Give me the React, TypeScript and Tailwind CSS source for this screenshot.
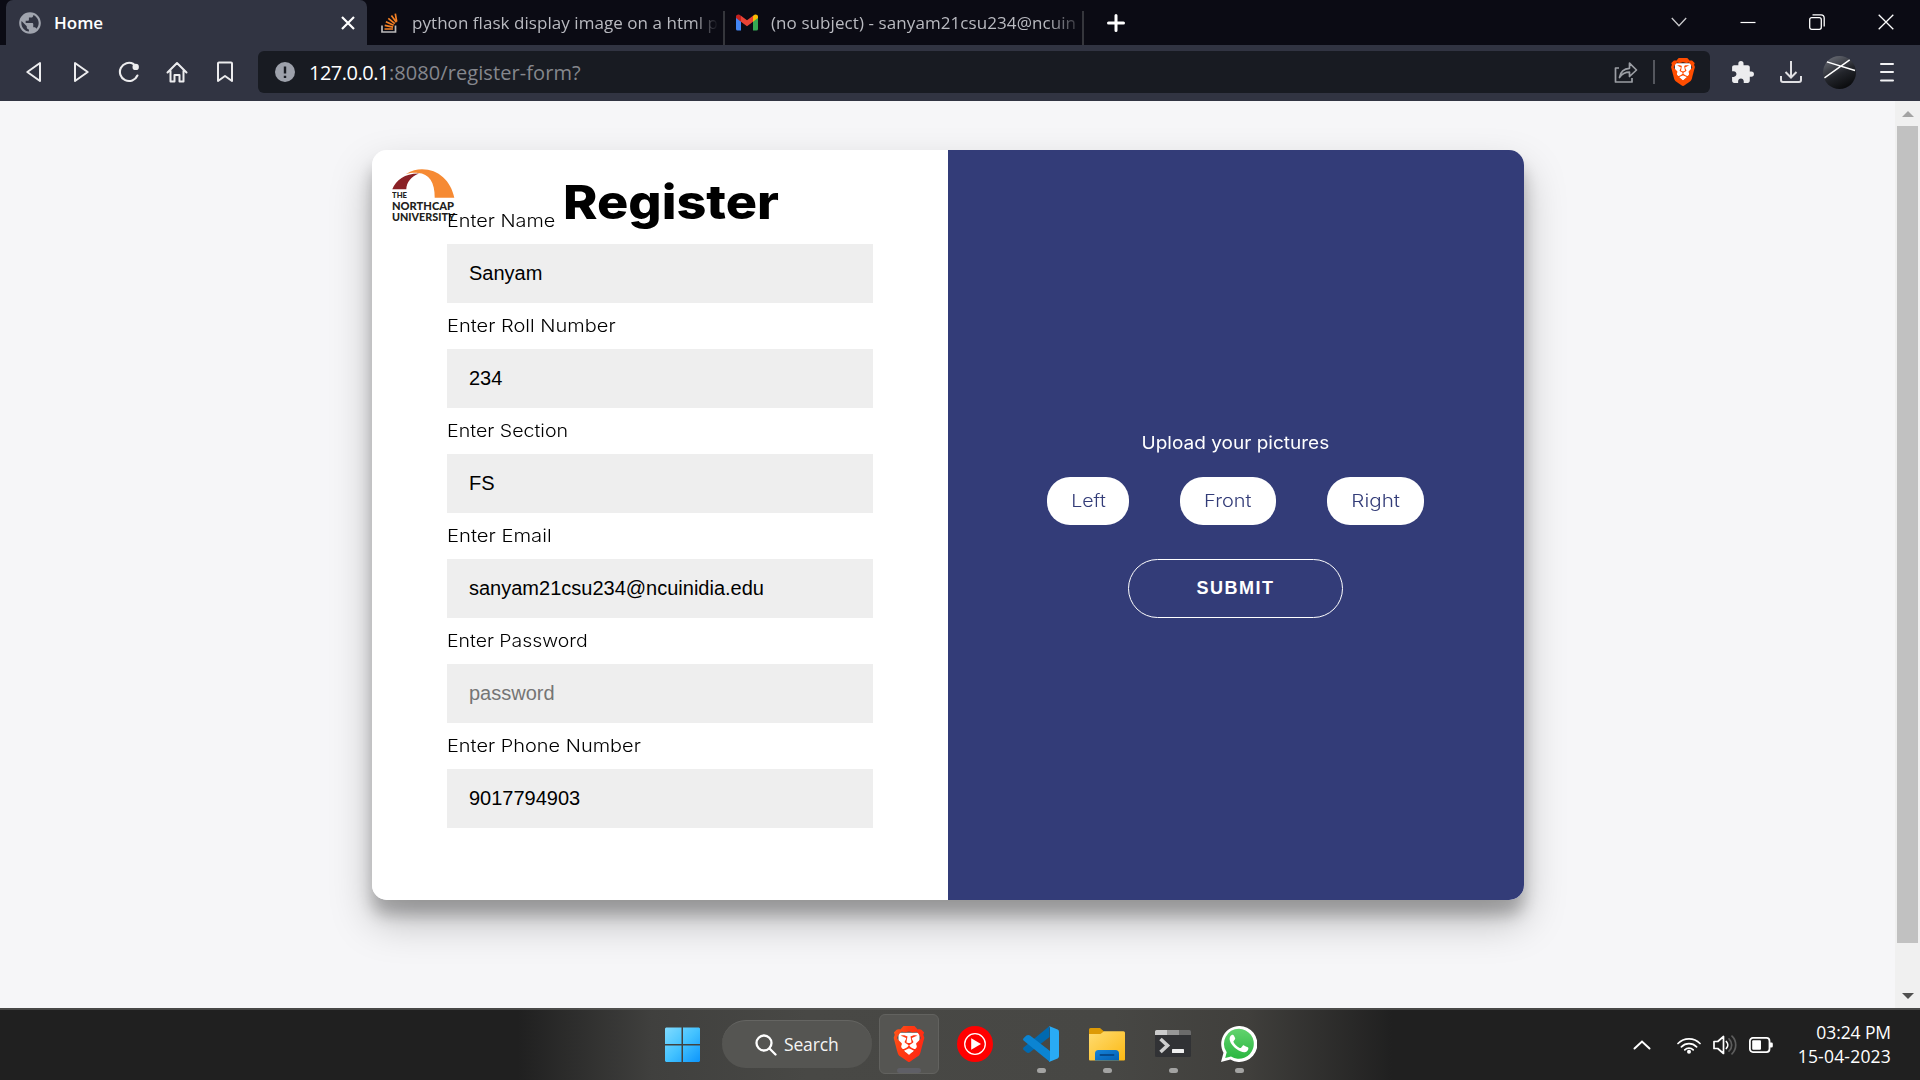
import React from "react";
import { SiBrave } from "react-icons/si";
import { MdExtension, MdPublic } from "react-icons/md";

const FIELDS = [
  { label: "Enter Name", value: "Sanyam", stretch: "scale-x-[1.135]" },
  { label: "Enter Roll Number", value: "234", stretch: "scale-x-[1.145]" },
  { label: "Enter Section", value: "FS", stretch: "scale-x-[1.12]" },
  { label: "Enter Email", value: "sanyam21csu234@ncuinidia.edu", stretch: "scale-x-[1.155]" },
  { label: "Enter Password", value: "", placeholder: "password", stretch: "scale-x-[1.11]" },
  { label: "Enter Phone Number", value: "9017794903", stretch: "scale-x-[1.14]" },
];

function BraveLion({ className, fill }: { className: string; fill: string }) {
  return (
    <svg viewBox="0 0 24 24" className={className}>
      <defs>
        <linearGradient id="lion" x1="0" y1="0" x2="1" y2="0.4">
          <stop offset="0" stopColor="#ff5a1c" />
          <stop offset="0.45" stopColor="#ff3a12" />
          <stop offset="1" stopColor="#ff2a14" />
        </linearGradient>
      </defs>
      <polygon points="5,4.5 19,4.5 19,13 12,20 5,13" fill="#fff" />
      <SiBrave size={24} style={{ fill }} />
    </svg>
  );
}

function GmailLogo() {
  return (
    <svg viewBox="0 0 22 16" className="h-[17px] w-[22px]">
      <path d="M0 2v12.5A1.5 1.5 0 0 0 1.500 16H5V6.500z" fill="#4285f4" />
      <path d="M17 6.500V16h3.500a1.500 1.500 0 0 0 1.500-1.500V2z" fill="#34a853" />
      <path d="M17 1.300V7.200l5-3.700V2.200C22 .2 19.700-.7 18.200.4z" fill="#fbbc04" />
      <path d="M5 7.200V1.300l6 4.500 6-4.500v5.900l-6 4.500z" fill="#ea4335" />
      <path d="M0 2.200v1.300l5 3.700V1.300L3.800.4C2.300-.7 0 .2 0 2.200z" fill="#c5221f" />
    </svg>
  );
}

function TabStrip() {
  return (
    <div className="flex h-[45px] bg-[#0b0b14] pl-[6px]">
      <div className="flex w-[361px] items-center rounded-t-[7px] bg-[#313442] pl-[11px] pr-[12px]">
        <MdPublic className="size-[26px] text-[#a0a4ae]" />
        <span className="ml-[11px] text-[17px] font-semibold text-white">Home</span>
        <svg viewBox="0 0 14 14" className="ml-auto size-[14px] stroke-white" strokeWidth="2.200">
          <path d="M1 1l12 12M13 1L1 13" />
        </svg>
      </div>
      <div className="flex w-[357px] items-center pl-[14px]">
        <svg viewBox="0 0 17 20" className="h-[20px] w-[17px] shrink-0" fill="none">
          <path d="M1 12.500V19h13.500v-6.500" stroke="#bcbbbb" strokeWidth="1.700" />
          <path d="M3.500 16h8.500M3.700 12.400l8.400 1.700M4.900 8.700l7.800 3.600M7.300 5.300l6.500 5.400M10.400 2.600l5 6.700M14.300.6l1.400 8" stroke="#f48024" strokeWidth="1.700" />
        </svg>
        <span className="ml-[14px] w-[306px] overflow-hidden whitespace-nowrap text-[17px] tracking-[0.05px] text-[#b9bac0] [mask-image:linear-gradient(to_right,black_92%,transparent_100%)]">
          python flask display image on a html p
        </span>
      </div>
      <div className="mt-[11px] h-[34px] w-[2px] shrink-0 -translate-x-[1px] bg-[#35363c]" />
      <div className="flex w-[357px] items-center pl-[10px]">
        <GmailLogo />
        <span className="ml-[13px] w-[306px] overflow-hidden whitespace-nowrap text-[17px] tracking-[0.08px] text-[#b9bac0] [mask-image:linear-gradient(to_right,black_90%,transparent_103%)]">
          (no subject) - sanyam21csu234@ncuin
        </span>
      </div>
      <div className="mt-[11px] h-[34px] w-[2px] shrink-0 -translate-x-[1px] bg-[#35363c]" />
      <svg viewBox="0 0 18 18" className="ml-[22px] mt-[14px] size-[18px] stroke-white" strokeWidth="3" strokeLinecap="round">
        <path d="M9 1.500v15M1.500 9h15" />
      </svg>
      <div className="ml-auto flex items-center pr-[26px] pb-[2px]">
        <svg viewBox="0 0 16 16" className="size-[16px]" fill="none" stroke="#c9c9cc" strokeWidth="1.300"><path d="M.8 4L8 11.800 15.200 4" /></svg>
        <svg viewBox="0 0 16 16" className="ml-[53px] size-[16px]" fill="none" stroke="#fff" strokeWidth="1.200"><path d="M.5 8.500h15" /></svg>
        <svg viewBox="0 0 16 16" className="ml-[53px] size-[16px]" fill="none" stroke="#fff" strokeWidth="1.300">
          <rect x=".7" y="3.700" width="11.600" height="11.600" rx="2" />
          <path d="M3.500.9H12a3.200 3.200 0 0 1 3.200 3.200v8.400" />
        </svg>
        <svg viewBox="0 0 16 16" className="ml-[53px] size-[16px]" fill="none" stroke="#fff" strokeWidth="1.300"><path d="M.7.7l14.600 14.600M15.300.7L.7 15.300" /></svg>
      </div>
    </div>
  );
}

function Toolbar() {
  return (
    <div className="flex h-[56px] items-center bg-[#313442] pl-[25px] pr-[26px] pb-[2px]">
      <svg viewBox="0 0 16 22" className="h-[22px] w-[17px]" fill="none" stroke="#ececee" strokeWidth="2" strokeLinejoin="round"><path d="M14.500 2v18L1.800 11z" /></svg>
      <svg viewBox="0 0 16 22" className="ml-[31px] h-[22px] w-[17px]" fill="none" stroke="#ececee" strokeWidth="2" strokeLinejoin="round"><path d="M1.500 2v18L14.200 11z" /></svg>
      <svg viewBox="0 0 22 22" className="ml-[28px] size-[22px]" fill="none" stroke="#ececee" strokeWidth="2.100" strokeLinecap="round">
        <path d="M15.500 3A9.100 9.100 0 1 0 19.400 14.500" />
        <circle cx="17.700" cy="5.900" r="3.200" fill="#ececee" stroke="none" />
      </svg>
      <svg viewBox="0 0 22 22" className="ml-[26px] size-[22px]" fill="none" stroke="#ececee" strokeWidth="2" strokeLinejoin="round" strokeLinecap="round">
        <path d="M1.500 11.500L11 2l9.500 9.500M4.500 10v10.500h4V14h5v6.500h4V10" />
      </svg>
      <svg viewBox="0 0 18 22" className="ml-[28px] h-[22px] w-[18px]" fill="none" stroke="#ececee" strokeWidth="2" strokeLinejoin="round"><path d="M2 2.500A1 1 0 0 1 3 1.500h12a1 1 0 0 1 1 1V20l-7-5-7 5z" /></svg>
      <div className="ml-[24px] flex h-[42px] flex-1 items-center rounded-[6px] bg-[#181b22] pl-[17px] pr-[13px]">
        <svg viewBox="0 0 20 20" className="size-[20px]">
          <circle cx="10" cy="10" r="10" fill="#9da1ab" />
          <path d="M10 4.500v7M10 13.700v2.300" stroke="#181b22" strokeWidth="2.400" />
        </svg>
        <span className="ml-[14px] whitespace-nowrap pt-[2px] text-[20px] tracking-[-0.500px] text-white">127.0.0.1</span>
        <span className="whitespace-nowrap pt-[2px] text-[20px] tracking-[0.080px] text-[#85878d]">:8080/register-form?</span>
        <svg viewBox="0 0 24 22" className="ml-auto h-[22px] w-[24px]" fill="none" stroke="#9b9ea4" strokeWidth="1.700" strokeLinejoin="round">
          <path d="M5 7H1.500v14H18v-4" />
          <path d="M5.500 16.500C6.500 10.500 10 7.500 15.500 7.300V2.200L22.500 9l-7 6.500v-4.300C11 11.200 8 12.700 5.500 16.500z" />
        </svg>
        <div className="ml-[15px] h-[24px] w-[2px] bg-[#54575e]" />
        <BraveLion className="ml-[14px] size-[28px]" fill="#ff4d00" />
      </div>
      <MdExtension className="ml-[20px] size-[25px] text-[#ececee]" />
      <svg viewBox="0 0 22 22" className="ml-[25px] size-[22px]" fill="none" stroke="#e0e0e3" strokeWidth="2"><path d="M11 0v16M5.500 11l5.500 5.500L16.500 11M1 15v4a2 2 0 0 0 2 2h16a2 2 0 0 0 2-2v-4" /></svg>
      <svg viewBox="0 0 34 34" className="ml-[21px] size-[33px]">
        <defs>
          <linearGradient id="avatar" x1="0.200" y1="0" x2="0.700" y2="1">
            <stop offset="0" stopColor="#6a6d76" />
            <stop offset="0.550" stopColor="#23252b" />
            <stop offset="1" stopColor="#08090b" />
          </linearGradient>
        </defs>
        <circle cx="17" cy="17" r="17" fill="url(#avatar)" />
        <path d="M1.500 22.500L27.500 4M4 6l29 9" stroke="#fff" strokeWidth="1.500" />
      </svg>
      <svg viewBox="0 0 14 20" className="ml-[24px] h-[20px] w-[14px]" stroke="#f2f2f4" strokeWidth="2" strokeLinecap="round"><path d="M1 2h12M1 10h12M1 18.500h12" /></svg>
    </div>
  );
}

function UniversityLogo() {
  return (
    <svg viewBox="0 0 64 58" className="absolute left-[20.500px] top-[18px] h-[58px] w-[64px]">
      <path d="M.3 21.300C4 12 13 5.200 27 5.400 19 8.500 14.600 14 14.300 21.300z" fill="#8a2126" />
      <path d="M14 6C19.500 2.500 25 1.300 30 1.300c16.500 0 29 11.700 32.300 28.400H42.700C43 14 37 5.600 26 4.900 21 4.700 18 5 14 6z" fill="#f68a33" />
      <g fontFamily="Lato, 'Open Sans', sans-serif" fontWeight="900" fill="#231f20">
        <text x="0" y="30" fontSize="8" textLength="15" lengthAdjust="spacingAndGlyphs">THE</text>
        <text x="0" y="41.800" fontSize="12" textLength="62" lengthAdjust="spacingAndGlyphs">NORTHCAP</text>
        <text x="0" y="52.800" fontSize="12" textLength="63" lengthAdjust="spacingAndGlyphs">UNIVERSITY</text>
      </g>
    </svg>
  );
}

function RegisterCard() {
  return (
    <div className="flex h-[750px] w-[1152px] overflow-hidden rounded-[15px] bg-white font-['Inter',sans-serif]">
      <div className="relative w-[576px] px-[75px] pt-[48px]">
        <UniversityLogo />
        <h1 className="absolute left-[191.500px] top-[21.500px] origin-left scale-x-[1.110] whitespace-nowrap text-[47px] font-extrabold leading-[60px] text-black">Register</h1>
        {FIELDS.map((f) => (
          <label key={f.label} className="relative block">
            <span className={`block h-[46px] w-fit origin-left whitespace-nowrap text-[17.500px] font-light leading-[46px] text-black ${f.stretch}`}>{f.label}</span>
            <input
              readOnly
              value={f.value}
              placeholder={f.placeholder}
              className="block h-[59px] w-[426px] bg-[#eeeeee] px-[22.500px] font-['Liberation_Sans',sans-serif] text-[20px] text-black outline-none placeholder:text-[#757575]"
            />
          </label>
        ))}
      </div>
      <div className="flex flex-1 flex-col items-center bg-[#333c78] pt-[278px]">
        <p className="scale-x-[1.087] text-[17.500px] leading-[29px] text-white">Upload your pictures</p>
        <div className="mt-[20px] flex gap-[51px] text-[17.500px] font-light text-[#333c78]">
          <span className="flex h-[48px] w-[82px] items-center justify-center rounded-[23px] bg-white"><span className="scale-x-[1.120]">Left</span></span>
          <span className="flex h-[48px] w-[96px] items-center justify-center rounded-[23px] bg-white"><span className="scale-x-[1.140]">Front</span></span>
          <span className="flex h-[48px] w-[97px] items-center justify-center rounded-[23px] bg-white"><span className="scale-x-[1.180]">Right</span></span>
        </div>
        <button className="mt-[34px] h-[59px] w-[215px] rounded-[30px] border border-white font-['Liberation_Sans',sans-serif] text-[18px] font-bold tracking-[1.500px] text-white">SUBMIT</button>
      </div>
    </div>
  );
}

function Scrollbar() {
  return (
    <div className="flex w-[25px] flex-col items-center bg-[#f0f0f0]">
      <svg viewBox="0 0 12 6" className="mt-[10px] h-[6px] w-[12px]"><path d="M6 0l6 6H0z" fill="#a3a3a3" /></svg>
      <div className="mt-[9px] h-[817px] w-[21px] bg-[#c1c1c1]" />
      <svg viewBox="0 0 12 6" className="mt-[50px] h-[6px] w-[12px]"><path d="M6 6l6-6H0z" fill="#505050" /></svg>
    </div>
  );
}

function RunningApp({ children }: { children: React.ReactNode }) {
  return (
    <div className="flex w-[36px] flex-col items-center pt-[16px]">
      {children}
      <div className="mt-[6px] h-[5px] w-[9px] rounded-full bg-[#a3a3a2]" />
    </div>
  );
}

function Taskbar() {
  return (
    <div className="grid h-[72px] grid-cols-[1fr_592px_1fr] border-t-2 border-[#5a5a58]/70 bg-[linear-gradient(to_right,#202020_27%,#40403e_34%,#484845_42%,#474744_58%,#403f3c_65%,#202020_72.500%)]">
      <div />
      <div className="flex translate-x-[1px]">
        <svg viewBox="0 0 36 36" className="mt-[17px] size-[36px] -translate-x-[0.500px]">
          <defs>
            <linearGradient id="win" x1="0" y1="0" x2="36" y2="36" gradientUnits="userSpaceOnUse">
              <stop offset="0" stopColor="#82dcff" />
              <stop offset="0.500" stopColor="#43c2ff" />
              <stop offset="1" stopColor="#0a93fb" />
            </linearGradient>
          </defs>
          <path d="M1.500.5H17v16.500H.5V1.500zM18.500.5h16l1 1V17h-17zM.5 18.500H17V35H1.500l-1-1zM18.500 18.500h17V34l-1 1h-16z" fill="url(#win)" />
        </svg>
        <div className="ml-[21px] mt-[10px] flex h-[48px] w-[150px] items-center rounded-full border-t border-[#656562] bg-[#555552] pl-[33px]">
          <svg viewBox="0 0 22 22" className="size-[22px]" fill="none" stroke="#fff" strokeWidth="2.300" strokeLinecap="round"><circle cx="9" cy="9" r="7.500" /><path d="M14.500 14.500L20.500 20.500" /></svg>
          <span className="ml-[7px] text-[17.500px] tracking-[-0.150px] text-[#f4f4f4]">Search</span>
        </div>
        <div className="ml-[7px] mt-[4px] flex h-[60px] w-[60px] flex-col items-center rounded-[6px] border border-[#62625f] bg-[#555552] pt-[11px]">
          <BraveLion className="size-[36px]" fill="url(#lion)" />
          <div className="mt-[6px] h-[5px] w-[24px] shrink-0 rounded-full bg-[#5f5f66]" />
        </div>
        <svg viewBox="0 0 36 36" className="ml-[18px] mt-[16px] size-[36px]">
          <circle cx="18" cy="18" r="18" fill="#f00" />
          <circle cx="18" cy="18" r="10.300" fill="none" stroke="#fff" strokeWidth="1.300" />
          <path d="M14.200 12.300L24 18l-9.800 5.700z" fill="#fff" />
        </svg>
        <div className="ml-[30px] flex gap-[30px]">
          <RunningApp>
            <svg viewBox="0 0 36 36" className="size-[36px]">
              <path d="M26.500 0v11L7 26.300a3 3 0 0 1-3.600 0L.8 24a1.800 1.800 0 0 1 0-2.700z" fill="#0069b0" />
              <path d="M.8 12l2.600-2.400a3 3 0 0 1 3.600 0L27 25v11L.8 14.700A1.800 1.800 0 0 1 .8 12z" fill="#0b84d2" />
              <path d="M26 0l8.600 3.600A2.500 2.500 0 0 1 36 5.900v24.200a2.500 2.500 0 0 1-1.400 2.300L26 36c.7-.5 1-1.300 1-2.200V2.200c0-.9-.3-1.700-1-2.200z" fill="#29abf5" />
            </svg>
          </RunningApp>
          <RunningApp>
            <svg viewBox="0 0 36 36" className="size-[36px]">
              <defs>
                <linearGradient id="folder" x1="0" y1="0" x2="1" y2="1"><stop offset="0" stopColor="#ffdc72" /><stop offset="1" stopColor="#fcb913" /></linearGradient>
                <linearGradient id="drawer" x1="0" y1="0" x2="1" y2="1"><stop offset="0" stopColor="#1683d8" /><stop offset="1" stopColor="#0360b4" /></linearGradient>
              </defs>
              <path d="M0 3.500A1.500 1.500 0 0 1 1.500 2H11l4 3.500V9H0z" fill="#dd9a06" />
              <path d="M0 8h11.500L15 5.200h19.500A1.500 1.500 0 0 1 36 6.700V33.500a1 1 0 0 1-1 1H1a1 1 0 0 1-1-1z" fill="url(#folder)" />
              <path d="M6 34.500V27.500a3.500 3.500 0 0 1 3.500-3.500h17a3.500 3.500 0 0 1 3.500 3.500v7z" fill="url(#drawer)" />
              <path d="M11.500 29h13" stroke="#064a8c" strokeWidth="1.800" strokeLinecap="round" />
            </svg>
          </RunningApp>
          <RunningApp>
            <svg viewBox="0 0 36 36" className="size-[36px]">
              <rect y="4" width="36" height="27" rx="1.500" fill="#313235" />
              <path d="M0 9V5.500A1.500 1.500 0 0 1 1.500 4H12v5z" fill="#cbcbcb" />
              <path d="M12 4h12v5H12z" fill="#979797" />
              <path d="M24 4h10.500A1.500 1.500 0 0 1 36 5.500V9H24z" fill="#6b6b6b" />
              <path d="M5.500 13l7 6.500-7 6.500" fill="none" stroke="#cfcfcf" strokeWidth="3.600" />
              <rect x="17" y="23" width="12" height="4" rx=".6" fill="#f0f0f0" />
            </svg>
          </RunningApp>
          <RunningApp>
            <svg viewBox="0 0 36 36" className="size-[36px]">
              <defs><linearGradient id="wa" x1="0" y1="0" x2="0" y2="1"><stop offset="0" stopColor="#62d36e" /><stop offset="1" stopColor="#2bb741" /></linearGradient></defs>
              <path d="M18 0a18 18 0 1 1-8.600 33.600L0 36l2.500-9.200A18 18 0 0 1 18 0z" fill="#fff" />
              <path d="M18 2.800a15 15 0 1 1-8 27.800L4.200 32l1.500-5.700A15 15 0 0 1 18 2.800z" fill="url(#wa)" />
              <path d="M12.800 9.600c-.5-1-1-.9-1.700-.8-1 .2-2.500 1.700-2.500 4 0 3.300 3 7.200 6.500 10 3.600 2.800 7.500 4 9.500 3.200 1.800-.7 2.700-2.200 2.800-3.800 0-.7-.3-.9-4.300-2.800-.6-.2-1-.2-1.400.4l-1.600 2c-.4.4-.8.400-1.400.1-3-1.400-5-3.400-6.200-5.800-.2-.4-.1-.8.200-1.100l1.300-1.700c.3-.5.2-.8.100-1.200z" fill="#fff" />
            </svg>
          </RunningApp>
        </div>
      </div>
      <div className="flex items-center justify-end pr-[29px]">
        <svg viewBox="0 0 18 10" className="h-[10px] w-[18px]" fill="none" stroke="#fff" strokeWidth="2" strokeLinecap="round"><path d="M1.500 8.500L9 1.500l7.500 7" /></svg>
        <svg viewBox="0 0 24 18" className="ml-[26px] h-[18px] w-[24px]" fill="none" stroke="#fff" strokeWidth="1.700" strokeLinecap="round">
          <path d="M1 7.500a15.500 15.500 0 0 1 22 0M4.400 10.800a10.800 10.800 0 0 1 15.200 0M7.800 13.800a6 6 0 0 1 8.400 0" />
          <circle cx="12" cy="15.700" r="2" fill="#fff" stroke="none" />
        </svg>
        <svg viewBox="0 0 25 20" className="ml-[12px] h-[20px] w-[25px]" fill="none" stroke="#fff" strokeWidth="1.700" strokeLinejoin="round" strokeLinecap="round">
          <path d="M1 6.500h3.800L10.500 1.500v17L4.800 13.500H1z" />
          <path d="M13.300 6.500a5 5 0 0 1 0 7" />
          <path d="M16 3.800a8.500 8.500 0 0 1 0 12.400M19 1.200a12.300 12.300 0 0 1 0 17.600" stroke="#5d5d5d" />
        </svg>
        <svg viewBox="0 0 24 16" className="ml-[11px] h-[16px] w-[24px]" fill="none" stroke="#fff" strokeWidth="1.800">
          <rect x=".9" y=".9" width="19.600" height="14.200" rx="3" />
          <rect x="3.200" y="3.200" width="8.800" height="9.600" rx="1" fill="#fff" stroke="none" />
          <path d="M21 5.500h1.500a1.300 1.300 0 0 1 1.300 1.300v2.400a1.300 1.300 0 0 1-1.300 1.300H21z" fill="#fff" stroke="none" />
        </svg>
        <div className="ml-[25px] pb-[3px] text-right text-[17.500px] leading-[24px] text-white">
          <div className="tracking-[-0.100px]">03:24 PM</div>
          <div className="tracking-[0.200px]">15-04-2023</div>
        </div>
      </div>
    </div>
  );
}

export default function App() {
  return (
    <div className="flex h-[1080px] w-[1920px] flex-col overflow-hidden font-['Open_Sans',sans-serif]">
      <TabStrip />
      <Toolbar />
      <div className="flex h-[907px]">
        <div className="flex flex-1 justify-center overflow-hidden bg-[#f6f6f8] pt-[49px]">
          <div className="h-[750px] rounded-[15px] shadow-[0_21px_42px_rgba(0,0,0,0.25),0_15px_15px_rgba(0,0,0,0.22)]">
            <RegisterCard />
          </div>
        </div>
        <Scrollbar />
      </div>
      <Taskbar />
    </div>
  );
}
